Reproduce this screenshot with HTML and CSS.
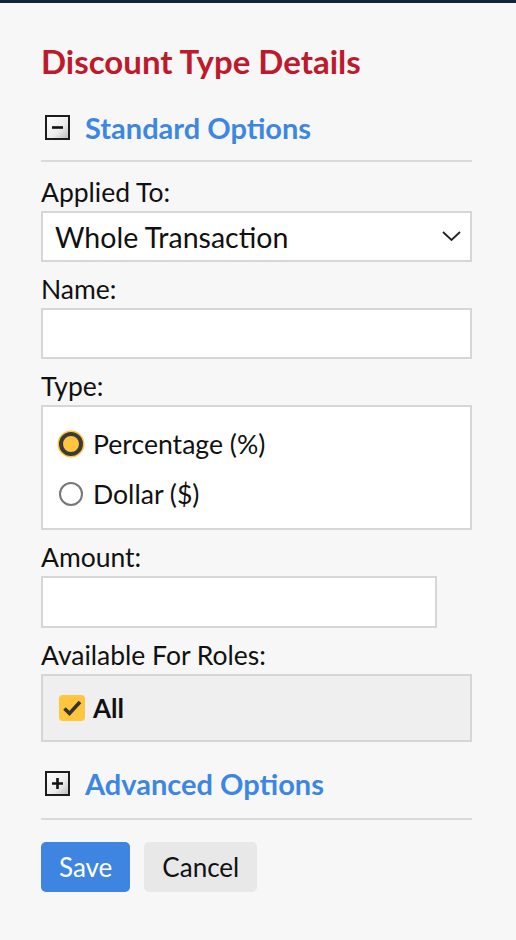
FILE: index.html
```html
<!DOCTYPE html>
<html lang="en">
<head>
    <meta charset="UTF-8">
    <meta name="viewport" content="width=device-width, initial-scale=1.0">
    <title>Discount Type Details</title>
    <link rel="stylesheet" href="styles.css">
</head>
<body>
    <div class="panel">
        <h1 class="title">Discount Type Details</h1>

        <!-- Standard options -->
        <div class="section-head">
            <svg class="toggle" width="25" height="25" viewBox="0 0 25 25">
                <defs>
                    <linearGradient id="bevel" x1="0" y1="0" x2="1" y2="1">
                        <stop offset="0" stop-color="#ffffff"/>
                        <stop offset="0.6" stop-color="#ececec"/>
                        <stop offset="1" stop-color="#b8b8b8"/>
                    </linearGradient>
                </defs>
                <rect x="1" y="1" width="23" height="23" fill="url(#bevel)" stroke="#1c1c1c" stroke-width="2"/>
                <path d="M7 12.5h11" stroke="#111" stroke-width="2.6"/>
            </svg>
            <a class="section-link" href="#">Standard Options</a>
        </div>

        <div class="field">
            <label class="field-label" for="applied">Applied To:</label>
            <div class="select-wrap">
                <select id="applied" class="select">
                    <option>Whole Transaction</option>
                    <option>Single Item</option>
                </select>
                <svg class="chevron" width="19" height="10" viewBox="0 0 19 10">
                    <path d="M1 1l8.5 8 8.5-8" fill="none" stroke="#222" stroke-width="1.8"/>
                </svg>
            </div>
        </div>

        <div class="field">
            <label class="field-label" for="name">Name:</label>
            <input type="text" id="name" class="text-input">
        </div>

        <div class="field">
            <span class="field-label">Type:</span>
            <div class="radio-box">
                <label class="radio-row">
                    <input type="radio" name="type" class="radio" checked>
                    <span>Percentage (%)</span>
                </label>
                <label class="radio-row">
                    <input type="radio" name="type" class="radio">
                    <span>Dollar ($)</span>
                </label>
            </div>
        </div>

        <div class="field">
            <label class="field-label" for="amount">Amount:</label>
            <input type="text" id="amount" class="text-input amount">
        </div>

        <div class="field">
            <span class="field-label">Available For Roles:</span>
            <div class="roles-box">
                <label class="check-row">
                    <span class="check">
                        <svg width="20" height="18" viewBox="0 0 20 18">
                            <path d="M2.5 9.5l5 5L18 3" fill="none" stroke="#333" stroke-width="3.6"/>
                        </svg>
                    </span>
                    <span class="check-text">All</span>
                </label>
            </div>
        </div>

        <!-- Advanced options -->
        <div class="section-head advanced">
            <svg class="toggle" width="25" height="25" viewBox="0 0 25 25">
                <rect x="1" y="1" width="23" height="23" fill="url(#bevel)" stroke="#1c1c1c" stroke-width="2"/>
                <path d="M7 12.5h11M12.5 7v11" stroke="#111" stroke-width="2.6"/>
            </svg>
            <a class="section-link" href="#">Advanced Options</a>
        </div>

        <div class="actions">
            <button class="btn btn-save">Save</button>
            <button class="btn btn-cancel">Cancel</button>
        </div>
    </div>
</body>
</html>
```

FILE: styles.css
```css
body {
    margin: 0;
    background: #f7f7f7;
    border-top: 3px solid #13233e;
    font-family: Lato, "Open Sans", sans-serif;
    color: #111;
}

.panel {
    width: 431px;
    margin-left: 41px;
    padding-top: 38px;
}

.title {
    margin: 0;
    font-size: 33px;
    line-height: 40px;
    font-weight: 700;
    color: #bd1a2c;
}

.section-head {
    display: flex;
    align-items: center;
    gap: 15px;
    height: 34px;
    margin-top: 29px;
    padding-left: 4px;
    padding-bottom: 16px;
    border-bottom: 2px solid #dadada;
}

.section-head.advanced {
    margin-top: 24px;
    padding-bottom: 18px;
}

.toggle {
    flex: none;
}

.section-link {
    font-size: 29px;
    font-weight: 700;
    color: #3d87e2;
    text-decoration: none;
}

.field {
    margin-bottom: 13px;
}

.section-head + .field {
    margin-top: 16px;
}

.field-label {
    display: block;
    font-size: 26.5px;
    line-height: 29px;
    margin-bottom: 4px;
}

.select-wrap {
    position: relative;
}

.select, .text-input {
    display: block;
    box-sizing: border-box;
    width: 100%;
    height: 51px;
    margin: 0;
    border: 2px solid #d6d6d6;
    border-radius: 0;
    background: #fff;
    font-family: inherit;
    color: #111;
}

.select {
    appearance: none;
    -webkit-appearance: none;
    padding: 0 40px 0 12px;
    font-size: 28.5px;
}

.chevron {
    position: absolute;
    right: 11px;
    top: 20px;
    pointer-events: none;
}

.text-input.amount {
    width: 396px;
    height: 52px;
}

.radio-box {
    box-sizing: border-box;
    height: 125px;
    padding: 12px 15px 0;
    border: 2px solid #d6d6d6;
    background: #fff;
}

.radio-row {
    display: flex;
    align-items: center;
    gap: 9px;
    height: 50px;
    font-size: 26.6px;
}

.radio {
    appearance: none;
    -webkit-appearance: none;
    box-sizing: border-box;
    width: 24px;
    height: 24px;
    margin: 1px;
    border: 2px solid #767676;
    border-radius: 50%;
    background: #fff;
}

.radio:checked {
    border: 4px solid #3a3a3a;
    background: #ffc53d;
    box-shadow: 0 0 0 1.5px #ffc53d;
}

.roles-box {
    box-sizing: border-box;
    height: 68px;
    display: flex;
    align-items: center;
    padding-left: 16px;
    border: 2px solid #d6d6d6;
    background: #efefef;
}

.check-row {
    display: flex;
    align-items: center;
    gap: 8px;
}

.check {
    display: flex;
    align-items: center;
    justify-content: center;
    width: 26px;
    height: 26px;
    border-radius: 4px;
    background: #ffc53d;
}

.check-text {
    font-size: 26px;
    font-weight: 700;
}

.actions {
    display: flex;
    gap: 14px;
    margin-top: 22px;
}

.btn {
    height: 50px;
    padding: 0 18px;
    border: none;
    border-radius: 5px;
    font-family: inherit;
    font-size: 26px;
    cursor: pointer;
}

.btn-save {
    background: #3d85e0;
    color: #fff;
}

.btn-cancel {
    background: #e8e8e8;
    color: #111;
}
```
